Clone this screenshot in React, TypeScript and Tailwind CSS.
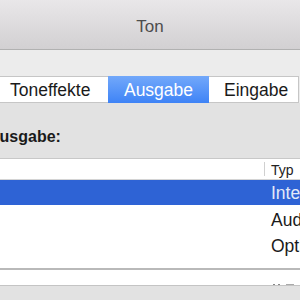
import React from "react";

export default function App() {
  return (
    <div className="w-[300px] h-[300px] overflow-hidden bg-[#ececec] font-['Liberation_Sans',Arial,sans-serif]">
      {/* Title bar */}
      <div className="h-[50px] bg-gradient-to-b from-[#e9e7e9] to-[#d2d0d2] border-b border-[#b1b1b1] flex items-center justify-center pt-[4px]">
        <span className="text-[17px] text-[#4d4d4d]">Ton</span>
      </div>
      {/* Space above tabs */}
      <div className="h-[26px]" />
      {/* Segmented tabs */}
      <div className="flex h-[27px] w-[299px] bg-white border-y border-r border-[#c6c6c6] text-[17.5px] text-[#1a1a1a]">
        <div className="w-[108px] pl-[10px] pt-[1px] leading-[24px]">Toneffekte</div>
        <div className="w-[101px] -my-[1px] h-[27px] bg-gradient-to-b from-[#72a8fa] to-[#3e83f6] text-white text-center pt-[2px] leading-[24px]">
          Ausgabe
        </div>
        <div className="flex-1 pl-[15px] pt-[1px] leading-[24px]">Eingabe</div>
      </div>
      {/* Box content */}
      <div className="bg-[#e2e2e2]">
        <div className="h-[55px] pt-[24px]">
          <div className="ml-[-12px] h-[20px] leading-[20px] text-[16px] font-bold text-[#1a1a1a] whitespace-nowrap">
            Ausgabe:
          </div>
        </div>
        {/* Table */}
        <div className="bg-white border-t border-[#c8c8c8]">
          <div className="h-[21px] border-b border-[#d4d4d4] flex items-center">
            <div className="w-[265px] h-full flex items-center justify-end">
              <div className="w-px h-[14px] bg-[#d0d0d0]" />
            </div>
            <div className="pl-[6px] text-[14px] text-[#222] leading-[20px] pt-[1px]">Typ</div>
          </div>
          <div className="h-[26px]">
            <div className="h-[25px] bg-[#2e63d5] pl-[271px] pt-[1px] leading-[24px] text-[17.5px] text-[#e3e9f8] whitespace-nowrap overflow-hidden">
              Intern
            </div>
          </div>
          <div className="h-[26px] pl-[271px] pt-[2px] leading-[24px] text-[17.5px] text-[#1a1a1a] whitespace-nowrap overflow-hidden">
            Audio
          </div>
          <div className="h-[26px] pl-[271px] pt-[2px] leading-[24px] text-[17.5px] text-[#1a1a1a] whitespace-nowrap overflow-hidden">
            Optisch
          </div>
          <div className="h-[10px]" />
        </div>
        <div className="h-[2px] bg-[#b9b9b9]" />
        <div className="h-[15px] bg-white relative">
          <div className="absolute left-[273px] bottom-0 flex gap-[3px]">
            <div className="w-[2px] h-[1px] bg-[#888]" />
            <div className="w-[2px] h-[1px] bg-[#888]" />
            <div className="w-[8px] h-[1px] bg-[#aaa] ml-[3px]" />
          </div>
        </div>
        <div className="h-px bg-[#c4c4c4]" />
        <div className="h-[20px] bg-[#e2e2e2]" />
      </div>
    </div>
  );
}
